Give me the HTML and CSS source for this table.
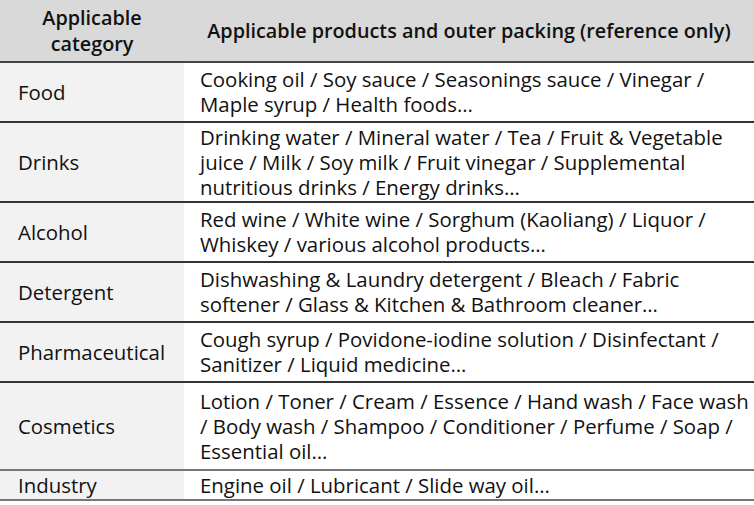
FILE: index.html
```html
<!DOCTYPE html>
<html>
<head>
<meta charset="utf-8">
<link rel="stylesheet" href="styles.css">
</head>
<body>
<table class="grid">
  <thead>
    <tr class="h-head">
      <th class="cat">Applicable<br>category</th>
      <th class="prod">Applicable products and outer packing (reference only)</th>
    </tr>
  </thead>
  <tbody>
    <tr class="h2"><td class="cat">Food</td><td class="prod">Cooking oil / Soy sauce / Seasonings sauce / Vinegar /<br>Maple syrup / Health foods…</td></tr>
    <tr class="h3"><td class="cat">Drinks</td><td class="prod">Drinking water / Mineral water / Tea / Fruit &amp; Vegetable<br>juice / Milk / Soy milk / Fruit vinegar / Supplemental<br>nutritious drinks / Energy drinks…</td></tr>
    <tr class="h2"><td class="cat">Alcohol</td><td class="prod">Red wine / White wine / Sorghum (Kaoliang) / Liquor /<br>Whiskey / various alcohol products…</td></tr>
    <tr class="h2"><td class="cat">Detergent</td><td class="prod">Dishwashing &amp; Laundry detergent / Bleach / Fabric<br>softener / Glass &amp; Kitchen &amp; Bathroom cleaner…</td></tr>
    <tr class="h2"><td class="cat">Pharmaceutical</td><td class="prod">Cough syrup / Povidone-iodine solution / Disinfectant /<br>Sanitizer / Liquid medicine…</td></tr>
    <tr class="h3c lightline"><td class="cat">Cosmetics</td><td class="prod">Lotion / Toner / Cream / Essence / Hand wash / Face wash<br>/ Body wash / Shampoo / Conditioner / Perfume / Soap /<br>Essential oil…</td></tr>
    <tr class="h1 lightline"><td class="cat">Industry</td><td class="prod">Engine oil / Lubricant / Slide way oil…</td></tr>
  </tbody>
</table>
</body>
</html>
```
FILE: styles.css
```css
html, body {
  margin: 0;
  padding: 0;
  background: #ffffff;
}
.grid {
  width: 754px;
  border-collapse: collapse;
  font-family: "Open Sans", "Noto Sans", sans-serif;
  font-size: 20.4px;
  line-height: 25px;
  color: #111;
}
.grid th, .grid td {
  padding: 0;
  vertical-align: middle;
  border-bottom: 2px solid #333;
}
.grid th {
  background: #d9d9d9;
  font-weight: 600;
  font-size: 19.8px;
  text-align: center;
  line-height: 26px;
}
.grid td.cat {
  background: #f2f2f2;
  padding-left: 18px;
}
.grid td.prod {
  padding-left: 16px;
}
.cat { width: 184px; box-sizing: border-box; }
.grid th.cat { padding: 0; }
.h-head { height: 62px; }
.h1 { height: 30px; }
.h2 { height: 60px; }
.h3 { height: 80px; }
.h3c { height: 88px; }
.lightline td { border-bottom-color: #777; }
.grid thead th { border-bottom-color: #444; }
```
